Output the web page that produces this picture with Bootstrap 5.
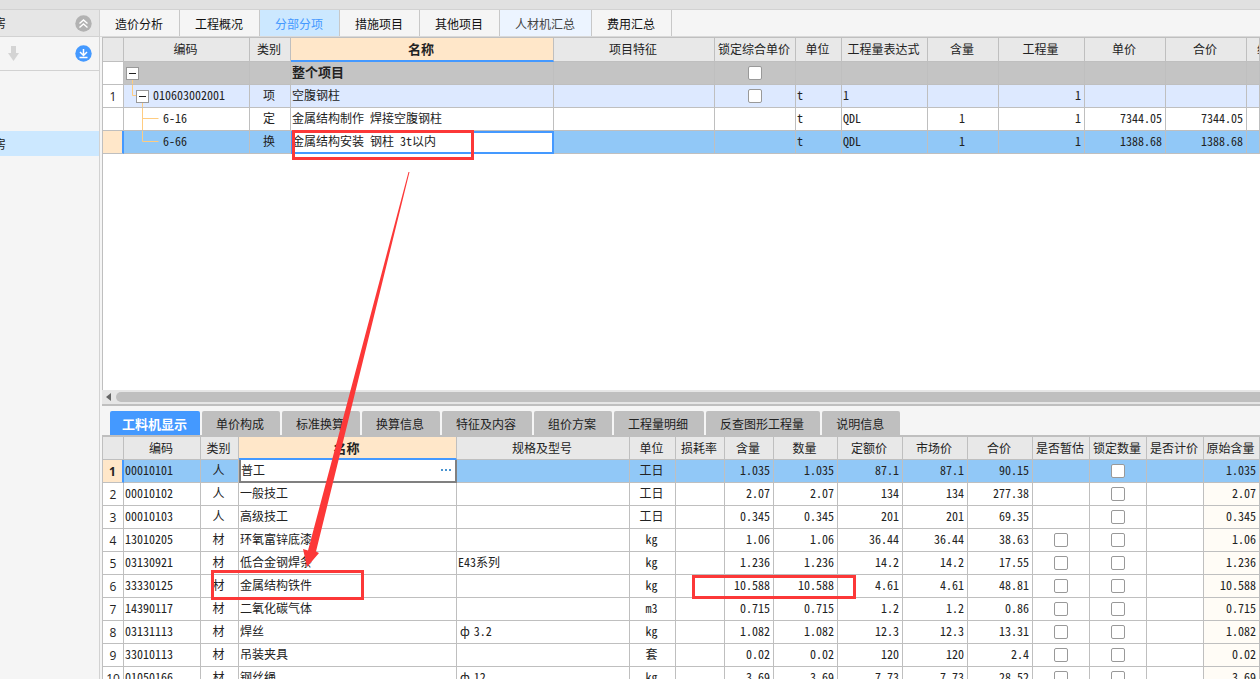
<!DOCTYPE html>
<html lang="zh-CN">
<head>
<meta charset="utf-8">
<meta name="viewport" content="width=device-width, initial-scale=1">
<title>分部分项</title>
<link href="https://cdn.jsdelivr.net/npm/bootstrap@5.3.0/dist/css/bootstrap.min.css" rel="stylesheet">
<style>
:root{--line:#bfbfbf;--blue:#4499ff;--sel:#91c8f7;--peach:#ffe7c9;--pane:#f5f5f5;--red:#fc3838}
body{font:12px/16px "Noto Sans Mono CJK SC","Noto Sans CJK SC","Liberation Mono",monospace;color:#222;background:var(--pane)}
.titlebar{height:10px;background:#e1e1e1;border-bottom:1px solid #d2d2d2}
.sidebar{width:100px;border-right:1px solid #d2d2d2}
.side-head{height:27px;background:#e6e6e6;border-bottom:1px solid #d2d2d2;padding-right:7px}
.side-tools{height:34px;border-bottom:1px solid #d2d2d2;padding:0 7px 0 8px}
.side-item{height:25px;margin-top:60px;background:#cce8ff}
.clipped{width:6px}
.icon-btn{border:0;padding:0;background:none;line-height:0}
.main-tabs{height:27px;border-bottom:1px solid #d9d9d9}
.main-tabs .nav-link{padding:0 16px 0 15px;height:26px;line-height:28px;color:#111;border-right:1px solid #c8c8c8;border-radius:0}
.main-tabs .nav-link.active{background:#cce8ff;color:var(--blue)}
.main-tabs .nav-link.hot{background:#ecf4ff;color:#444}
.work{margin-left:2px}
.sheet{border-left:1px solid var(--line);background:#fff}
.sheet-top{border-top:1px solid var(--line)}
.grid{table-layout:fixed;width:100%;border-collapse:separate;border-spacing:0}
.grid th,.grid td{height:23px;padding:0 2px 2px 1px;border-right:1px solid var(--line);border-bottom:1px solid var(--line);white-space:nowrap;overflow:hidden;line-height:16px;vertical-align:middle}
.sheet-top thead th{height:24px}
.grid thead th{background:#e8e8e8;font-weight:400;text-align:center;padding:0 2px 1px 0}
.grid thead .cur{background:var(--peach);font-size:13px;font-weight:700;padding-bottom:0;border-bottom:2px solid var(--blue)}
.grid thead .cut{text-align:left;padding-left:10px}
.grid tbody th{font:12px/16px "Open Sans","Noto Sans CJK SC",sans-serif;text-align:center;padding:2px 0 0}
.grid .n{text-align:right;padding-right:3px}
.grid .m{text-align:center;padding-left:0}
.grid .box{padding:0}
.grid .orig{background:#fffcf6}
.grid .group td{background:#c4c4c4;font-size:13px;font-weight:700}
.grid .item td{background:#dde9ff}
.grid .on td{background:var(--sel)}
.grid .on th{background:var(--peach);border-right:2px solid var(--blue);font-weight:700}
.grid .on .edit-top{background:#fff;outline:2px solid var(--blue);outline-offset:-2px}
.grid .on .edit-low{background:#fff;border:2px solid #808080;border-top:0;padding:0 3px 1px 0}
.tree{height:22px}
.tree svg{position:absolute;left:0;top:0;overflow:visible}
.tree path{fill:none;stroke:#ffcc80}
.code{padding-bottom:2px}
.fold{position:relative;width:13px;height:13px;padding:0;border:1px solid #999;background:#fff;line-height:0}
.fold::before{content:"";display:block;width:7px;height:1px;margin:0 auto;background:#222}
.lv1{margin-left:2px}
.lv2{margin-left:12px}
.leaf{margin-left:39px}
.phi{padding:0 4px 0 2px}
.tick{appearance:none;display:block;width:14px;height:14px;margin:0 auto;border:1px solid #999;border-radius:2px;background:#fff}
.tick:checked{background:var(--blue)}
.hbar{height:14px;background:#e6e6e6;padding-left:4px}
.thumb{height:10px;margin-left:5px;border-radius:5px 0 0 5px;background:var(--line)}
.lower{flex:0 0 275px}
.sub-tabs{border-top:2px solid var(--line);border-bottom:2px solid var(--line);padding:5px 0 0 8px;gap:2px}
.sub-tabs .nav-link{padding:0 16px 0 14px;height:24px;line-height:26px;border-radius:2px 2px 0 0;background:var(--line);color:#222}
.sub-tabs .nav-link.active{padding:0 13px 0 12px;background:var(--blue);color:#fff;font-size:13px;font-weight:700}
.more{border:0;padding:0;background:none;line-height:0}
.marks{position:absolute;left:0;top:0;width:100%;height:100%;pointer-events:none}
.marks rect{fill:none;stroke:var(--red);stroke-width:3}
.marks polygon{fill:var(--red)}
</style>
</head>
<body>
<div class="vh-100 d-flex flex-column overflow-hidden position-relative">
<header class="titlebar flex-shrink-0"></header>
<div class="d-flex flex-grow-1 overflow-hidden">
<aside class="sidebar flex-shrink-0">
  <div class="side-head d-flex align-items-center justify-content-between">
    <span class="clipped d-flex justify-content-end overflow-hidden">房</span>
    <button class="icon-btn" type="button" aria-label="收起"><svg width="17" height="17" viewBox="0 0 17 17"><circle cx="8.500" cy="8.500" r="8.200" fill="#b2b2b2"/><path d="M4.500 8.500l4-3.500 4 3.500M4.500 12.500l4-3.500 4 3.500" fill="none" stroke="#fff" stroke-width="1.400"/></svg></button>
  </div>
  <div class="side-tools d-flex align-items-center justify-content-between">
    <button class="icon-btn" type="button" aria-label="下移"><svg width="11" height="15" viewBox="0 0 11 15"><path d="M3 0h5v7h3L5.500 15 0 7h3z" fill="#d4d4d4"/></svg></button>
    <button class="icon-btn" type="button" aria-label="导入"><svg width="17" height="17" viewBox="0 0 17 17"><circle cx="8.500" cy="8.500" r="8.200" fill="#4499ff"/><path d="M8.500 4v6M5 7l3.500 3.500L12 7M4.500 12.500h8" fill="none" stroke="#fff" stroke-width="1.500"/></svg></button>
  </div>
  <div class="side-item d-flex align-items-center"><span class="clipped d-flex justify-content-end overflow-hidden">房</span></div>
</aside>
<main class="flex-grow-1 d-flex flex-column overflow-hidden">
  <nav class="nav main-tabs flex-nowrap flex-shrink-0">
    <a class="nav-link" href="#">造价分析</a><a class="nav-link" href="#">工程概况</a><a class="nav-link active" href="#">分部分项</a><a class="nav-link" href="#">措施项目</a><a class="nav-link" href="#">其他项目</a><a class="nav-link hot" href="#">人材机汇总</a><a class="nav-link" href="#">费用汇总</a>
  </nav>
  <div class="work flex-grow-1 d-flex flex-column overflow-hidden">
    <section class="sheet sheet-top flex-grow-1 overflow-hidden">
      <table class="grid">
        <colgroup><col style="width:21px"><col style="width:126px"><col style="width:41px"><col style="width:263px"><col><col style="width:81px"><col style="width:46px"><col style="width:86px"><col style="width:71px"><col style="width:86px"><col style="width:81px"><col style="width:81px"><col style="width:13px"></colgroup>
        <thead><tr><th></th><th>编码</th><th>类别</th><th class="cur">名称</th><th>项目特征</th><th>锁定综合单价</th><th>单位</th><th>工程量表达式</th><th>含量</th><th>工程量</th><th>单价</th><th>合价</th><th class="cut">综</th></tr></thead>
        <tbody>
          <tr class="group"><th></th><td class="p-0"><div class="tree position-relative d-flex align-items-center"><svg width="40" height="23"><path d="M8.500 17v6"/></svg><button class="fold lv1" type="button" aria-label="折叠"></button></div></td><td></td><td>整个项目</td><td></td><td class="box"><input class="tick" type="checkbox" aria-label="锁定综合单价"></td><td></td><td></td><td></td><td></td><td></td><td></td><td></td></tr>
          <tr class="item"><th>1</th><td class="p-0"><div class="tree position-relative d-flex align-items-center"><svg width="40" height="23"><path d="M8.500 0v10.500h4M18.500 17v6"/></svg><button class="fold lv2" type="button" aria-label="折叠"></button><span class="code ms-1">010603002001</span></div></td><td class="m">项</td><td>空腹钢柱</td><td></td><td class="box"><input class="tick" type="checkbox" aria-label="锁定综合单价"></td><td>t</td><td>1</td><td></td><td class="n">1</td><td></td><td></td><td></td></tr>
          <tr><th></th><td class="p-0"><div class="tree position-relative d-flex align-items-center"><svg width="40" height="23"><path d="M18.500 0v23M18.500 10.500h16"/></svg><span class="code leaf">6-16</span></div></td><td class="m">定</td><td>金属结构制作 焊接空腹钢柱</td><td></td><td></td><td>t</td><td>QDL</td><td class="m">1</td><td class="n">1</td><td class="n">7344.05</td><td class="n">7344.05</td><td></td></tr>
          <tr class="on"><th></th><td class="p-0"><div class="tree position-relative d-flex align-items-center"><svg width="40" height="23"><path d="M18.500 0v10.500h16"/></svg><span class="code leaf">6-66</span></div></td><td class="m">换</td><td class="edit-top">金属结构安装 钢柱 3t以内</td><td></td><td></td><td>t</td><td>QDL</td><td class="m">1</td><td class="n">1</td><td class="n">1388.68</td><td class="n">1388.68</td><td></td></tr>
        </tbody>
      </table>
    </section>
    <div class="hbar flex-shrink-0 d-flex align-items-center"><svg width="5" height="8" viewBox="0 0 5 8"><path d="M5 0v8L0 4z" fill="#666"/></svg><div class="thumb flex-grow-1"></div></div>
    <section class="lower d-flex flex-column overflow-hidden">
      <nav class="nav sub-tabs flex-nowrap flex-shrink-0">
        <a class="nav-link active" href="#">工料机显示</a><a class="nav-link" href="#">单价构成</a><a class="nav-link" href="#">标准换算</a><a class="nav-link" href="#">换算信息</a><a class="nav-link" href="#">特征及内容</a><a class="nav-link" href="#">组价方案</a><a class="nav-link" href="#">工程量明细</a><a class="nav-link" href="#">反查图形工程量</a><a class="nav-link" href="#">说明信息</a>
      </nav>
      <div class="sheet flex-grow-1 overflow-hidden">
      <table class="grid">
        <colgroup><col style="width:21px"><col style="width:77px"><col style="width:38px"><col style="width:218px"><col><col style="width:46px"><col style="width:49px"><col style="width:49px"><col style="width:64px"><col style="width:65px"><col style="width:65px"><col style="width:65px"><col style="width:57px"><col style="width:57px"><col style="width:57px"><col style="width:56px"></colgroup>
        <thead><tr><th></th><th>编码</th><th>类别</th><th class="cur">名称</th><th>规格及型号</th><th>单位</th><th>损耗率</th><th>含量</th><th>数量</th><th>定额价</th><th>市场价</th><th>合价</th><th>是否暂估</th><th>锁定数量</th><th>是否计价</th><th>原始含量</th></tr></thead>
        <tbody>
          <tr class="on"><th>1</th><td>00010101</td><td class="m">人</td><td class="edit-low"><div class="d-flex justify-content-between align-items-center"><span>普工</span><button class="more" type="button" aria-label="选择"><svg width="11" height="2"><path d="M0 0h2v2H0zM4 0h2v2H4zM8 0h2v2H8z" fill="#4a94d0"/></svg></button></div></td><td></td><td class="m">工日</td><td></td><td class="n">1.035</td><td class="n">1.035</td><td class="n">87.1</td><td class="n">87.1</td><td class="n">90.15</td><td></td><td class="box"><input class="tick" type="checkbox" aria-label="锁定数量"></td><td></td><td class="n">1.035</td></tr>
          <tr><th>2</th><td>00010102</td><td class="m">人</td><td>一般技工</td><td></td><td class="m">工日</td><td></td><td class="n">2.07</td><td class="n">2.07</td><td class="n">134</td><td class="n">134</td><td class="n">277.38</td><td></td><td class="box"><input class="tick" type="checkbox" aria-label="锁定数量"></td><td></td><td class="n orig">2.07</td></tr>
          <tr><th>3</th><td>00010103</td><td class="m">人</td><td>高级技工</td><td></td><td class="m">工日</td><td></td><td class="n">0.345</td><td class="n">0.345</td><td class="n">201</td><td class="n">201</td><td class="n">69.35</td><td></td><td class="box"><input class="tick" type="checkbox" aria-label="锁定数量"></td><td></td><td class="n orig">0.345</td></tr>
          <tr><th>4</th><td>13010205</td><td class="m">材</td><td>环氧富锌底漆</td><td></td><td class="m">kg</td><td></td><td class="n">1.06</td><td class="n">1.06</td><td class="n">36.44</td><td class="n">36.44</td><td class="n">38.63</td><td class="box"><input class="tick" type="checkbox" aria-label="是否暂估"></td><td class="box"><input class="tick" type="checkbox" aria-label="锁定数量"></td><td></td><td class="n orig">1.06</td></tr>
          <tr><th>5</th><td>03130921</td><td class="m">材</td><td>低合金钢焊条</td><td>E43系列</td><td class="m">kg</td><td></td><td class="n">1.236</td><td class="n">1.236</td><td class="n">14.2</td><td class="n">14.2</td><td class="n">17.55</td><td class="box"><input class="tick" type="checkbox" aria-label="是否暂估"></td><td class="box"><input class="tick" type="checkbox" aria-label="锁定数量"></td><td></td><td class="n orig">1.236</td></tr>
          <tr><th>6</th><td>33330125</td><td class="m">材</td><td>金属结构铁件</td><td></td><td class="m">kg</td><td></td><td class="n">10.588</td><td class="n">10.588</td><td class="n">4.61</td><td class="n">4.61</td><td class="n">48.81</td><td class="box"><input class="tick" type="checkbox" aria-label="是否暂估"></td><td class="box"><input class="tick" type="checkbox" aria-label="锁定数量"></td><td></td><td class="n orig">10.588</td></tr>
          <tr><th>7</th><td>14390117</td><td class="m">材</td><td>二氧化碳气体</td><td></td><td class="m">m3</td><td></td><td class="n">0.715</td><td class="n">0.715</td><td class="n">1.2</td><td class="n">1.2</td><td class="n">0.86</td><td class="box"><input class="tick" type="checkbox" aria-label="是否暂估"></td><td class="box"><input class="tick" type="checkbox" aria-label="锁定数量"></td><td></td><td class="n orig">0.715</td></tr>
          <tr><th>8</th><td>03131113</td><td class="m">材</td><td>焊丝</td><td><span class="phi">ф</span>3.2</td><td class="m">kg</td><td></td><td class="n">1.082</td><td class="n">1.082</td><td class="n">12.3</td><td class="n">12.3</td><td class="n">13.31</td><td class="box"><input class="tick" type="checkbox" aria-label="是否暂估"></td><td class="box"><input class="tick" type="checkbox" aria-label="锁定数量"></td><td></td><td class="n orig">1.082</td></tr>
          <tr><th>9</th><td>33010113</td><td class="m">材</td><td>吊装夹具</td><td></td><td class="m">套</td><td></td><td class="n">0.02</td><td class="n">0.02</td><td class="n">120</td><td class="n">120</td><td class="n">2.4</td><td class="box"><input class="tick" type="checkbox" aria-label="是否暂估"></td><td class="box"><input class="tick" type="checkbox" aria-label="锁定数量"></td><td></td><td class="n orig">0.02</td></tr>
          <tr><th>10</th><td>01050166</td><td class="m">材</td><td>钢丝绳</td><td><span class="phi">ф</span>12</td><td class="m">kg</td><td></td><td class="n">3.69</td><td class="n">3.69</td><td class="n">7.73</td><td class="n">7.73</td><td class="n">28.52</td><td class="box"><input class="tick" type="checkbox" aria-label="是否暂估"></td><td class="box"><input class="tick" type="checkbox" aria-label="锁定数量"></td><td></td><td class="n orig">3.69</td></tr>
        </tbody>
      </table>
      </div>
    </section>
  </div>
</main>
</div>
<svg class="marks" aria-hidden="true"><rect x="293.500" y="131.500" width="179" height="27"/><rect x="212.500" y="571.500" width="150" height="27"/><rect x="693.500" y="576.500" width="161" height="21"/><polygon points="408.500,172 409.500,172 316,551.500 319,553 307,567 303,549 308,550.500"/></svg>
</div>
<script src="https://cdn.jsdelivr.net/npm/bootstrap@5.3.0/dist/js/bootstrap.bundle.min.js"></script>
</body>
</html>
